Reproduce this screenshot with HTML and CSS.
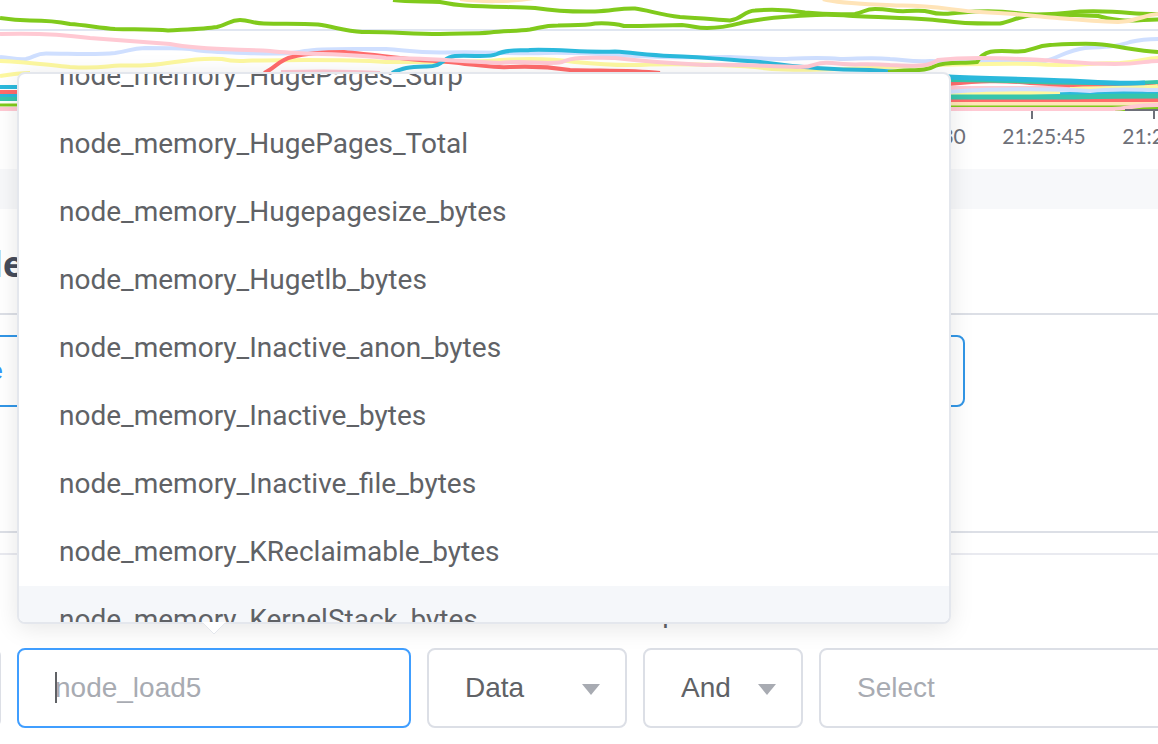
FILE: index.html
```html
<!DOCTYPE html>
<html lang="en">
<head>
<meta charset="utf-8">
<title>Metric rule</title>
<link rel="stylesheet" href="styles.css">
</head>
<body>
<main class="page">
  <section class="chart">
    <svg class="plot" viewBox="0 0 1158 120" preserveAspectRatio="none" aria-hidden="true">
      <path class="grid" d="M0 30H1158"/>
      <g class="series">
        <path class="peach" d="M460 -1C480 2 510 2 534 -2"/>
        <path class="green" d="M0 18C12 20 18 20.500 30 20.500C50 20.500 58 21.500 70 24C85 25 100 28 115 29C135 29.500 155 29 168 30.500C185 29.500 205 29 217 27C229 24 230 20 240 20C250 20 252 23.500 264 23.500C285 24 300 23.500 318 24.500C335 27 345 31 362 32C390 31.500 410 34 440 34C458 33 475 34 490 32.500C505 31 518 31 530 29.500C543 27 545 25.500 558 25.500C575 25 585 25.500 595 23.500C607 23 614 23 624 26C640 26.500 665 25.500 682 25C695 26 695 28 707 28C725 28 733 25 745 22C765 18 790 16 816 15C832 14 837 15 853 16C885 17.500 915 18 945 21C965 24 985 23.500 1000 23.500C1012 21 1020 16 1034 15C1060 14 1080 15 1098 16C1110 19 1113 20 1125 20.500C1138 21 1145 19.500 1158 19.500"/>
        <path class="green" d="M393 0C410 2 425 1 440 2C450 4 455 5 465 5.500C490 7 515 7 535 8C555 11 570 12 595 11.500C612 11 620 8 635 8.500C648 10 660 15 680 17C700 18 715 19.500 730 20.500C743 19 743 11 755 10.500C775 9 790 10 805 12.500C820 14 840 14.500 855 14C865 12 865 9 875 9C890 9 895 12 907 11C920 11 922 10 930 12C942 16 950 13 962 12.500C980 11 1000 11 1016 13C1034 16 1058 14 1080 11.500C1100 11 1120 12 1130 13C1142 14 1150 14 1158 14"/>
        <path class="peach" d="M823 -1C840 4 870 4 900 5.500C935 5 955 11 980 12C1010 13 1025 15 1045 17C1070 19 1090 21 1118 22C1140 21 1142 15 1158 14"/>
        <path class="blue" d="M0 57C12 58 18 60 26 59C35 57 36 53.500 46 53.500C70 53.500 95 55 115 53C130 51 130 48.500 145 48C162 48 175 48 190 49C204 52 220 52 245 53C275 54 290 54 305 51C320 48 350 49 386 49C405 50 415 53 445 52.500C480 51 510 54 545 53C580 52 615 55 640 56C670 58 700 57 730 57C750 58 765 59 785 59C805 58 820 57 840 59C858 59 870 57 890 59C908 60 910 62 930 61C965 62 1010 63 1045 61C1058 58 1068 50 1085 48C1102 47 1118 47 1130 42C1143 39 1150 39 1158 39"/>
        <path class="yellow" d="M0 61C25 62 50 65 70 67C100 69 105 66 120 65.500C145 66 155 65 175 62C195 59 210 58 222 59C234 62 240 61 252 60.500C290 60 340 59 386 62C430 62 470 63 500 60C535 58 555 59 575 62C595 64 625 66 650 64.500C690 64 740 65 772 69C810 71 850 69 890 67C930 65 1000 63 1035 64C1070 67 1090 63 1120 63C1140 62 1145 58 1158 58"/>
        <path class="red" d="M264 73C274 69 280 59 292 57C307 53 325 52 344 52C362 54 380 55 400 58C425 61 445 61 465 64C485 65 490 68 510 67C530 66 550 67 570 70C600 71 630 70 660 73"/>
        <path class="cyan" d="M392 73C403 68 408 67 425 66.500C445 67 442 57 455 56C475 55 488 58 497 54C507 49 520 51 530 50C560 49 585 53 615 51.500C635 53 650 55 670 56C705 57 730 60 760 62C795 67 835 70 870 70C905 72 925 74 951 77"/>
        <path class="green" d="M888 72C910 69 925 72 935 66C948 61 963 64 977 62C985 48 999 51 1018 51.500C1034 51 1034 46 1050 45C1070 44 1088 43 1102 44.500C1123 47 1139 51 1158 52"/>
        <path class="pink" d="M0 34C30 33 60 34 90 38C120 40 145 42 170 44C200 50 235 49 270 51C305 55 345 53 386 58C425 58 460 61 500 63C525 60 545 65 562 62C575 56 595 58 615 58C650 62 685 64 705 65C735 64 760 66 800 67C818 67 813 61 832 63C855 66 860 63 890 65C918 66 928 67 938 60C962 57 1000 58 1020 59C1055 60 1080 64 1115 64C1140 64 1145 61 1158 61"/>
        <path class="pink" d="M281 72C320 71 350 71 380 73"/>
        <path class="yellow" d="M0 76C12 74 18 73 30 73"/>
      </g>
      <g class="series">
        <path class="cyan" d="M0 87H20"/><path class="red" d="M0 92H20"/><path class="cyan" d="M0 96H20"/><path class="teal" d="M0 99H20"/><path class="green thin" d="M0 105H20"/><path class="pink" d="M0 109H20"/>
        <path class="pink" d="M948 88H1158"/>
        <path class="red" d="M948 84C980 81 1000 80 1030 83C1080 86 1110 87 1158 85"/>
        <path class="teal" d="M948 80C1020 80 1090 86 1158 82"/>
        <path class="cyan wide" d="M948 77C990 79 1030 79 1070 81C1105 83 1130 84 1145 83"/>
        <path class="yellow" d="M1070 89C1100 87 1145 89 1158 86"/>
        <path class="cyan" d="M1030 95L1110 93H1158"/><path class="yellow" d="M948 93H1030L1060 92"/>
        <path class="blue" d="M948 92C980 89 1050 88 1090 91C1115 88 1140 90 1158 90"/>
        <path class="red" d="M948 100H1158"/>
        <path class="teal wide" d="M948 97H1075C1100 96 1130 96 1158 96"/>
        <path class="peach" d="M948 104H1158"/>
        <path class="green thin" d="M948 107H1158"/>
        <path class="green" d="M1115 109H1158"/>
        <path class="pink" d="M948 109H1112C1130 109 1130 105 1158 105"/>
      </g>
      <path class="tick" d="M1125 110H1158M1032 111V119M1154 111V119"/>
    </svg>
    <div class="axis"><span>21:25:30</span><span>21:25:45</span><span>21:26:00</span></div>
  </section>
  <div class="band"></div>
  <header class="head"><h2>le</h2></header>
  <section class="panel"><button class="add" type="button">e</button></section>
  <form class="rule">
    <div class="field mid"><input class="control" type="text" aria-label="Name"></div>
    <div class="field metric">
      <input class="control active" type="text" placeholder="node_load5" aria-label="Metric">
      <span class="cursor"></span>
      <div class="popup">
        <div class="view">
          <ul class="list">
            <li>node_memory_HugePages_Surp</li>
            <li>node_memory_HugePages_Total</li>
            <li>node_memory_Hugepagesize_bytes</li>
            <li>node_memory_Hugetlb_bytes</li>
            <li>node_memory_Inactive_anon_bytes</li>
            <li>node_memory_Inactive_bytes</li>
            <li>node_memory_Inactive_file_bytes</li>
            <li>node_memory_KReclaimable_bytes</li>
            <li class="hover">node_memory_KernelStack_bytes</li>
          </ul>
        </div>
        <svg class="arrow" viewBox="0 0 24 13" aria-hidden="true"><path d="M0 0L12 12L24 0Z" fill="#fff"/><path d="M1 1L12 12L23 1" fill="none" stroke="#e4e7ed" stroke-width="1"/></svg>
      </div>
    </div>
    <div class="field mid">
      <select class="control" aria-label="Source"><option>Data</option></select>
      <svg class="caret" viewBox="0 0 18 11" aria-hidden="true"><path d="M0 0H18L9 11Z"/></svg>
    </div>
    <div class="field small">
      <label for="operator">Operator</label>
      <select class="control" id="operator"><option>And</option></select>
      <svg class="caret" viewBox="0 0 18 11" aria-hidden="true"><path d="M0 0H18L9 11Z"/></svg>
    </div>
    <div class="field large">
      <select class="control empty" aria-label="Value"><option>Select</option></select>
    </div>
  </form>
</main>
</body>
</html>
```
FILE: styles.css
```css
* { box-sizing: border-box; }
body {
  margin: 0;
  background: #fff;
  color: #606266;
  font-family: Roboto, sans-serif;
  font-size: 28px;
}
.page { min-height: 100vh; overflow: hidden; }

.chart { height: 169px; }
.plot { display: block; width: 100%; height: 120px; }
.plot path { fill: none; }
.grid { stroke: #e0e6f1; stroke-width: 2; }
.series path { stroke-width: 4; }
.series .thin { stroke-width: 3; }
.series .wide { stroke-width: 5; }
.green { stroke: #80ca1c; }
.blue { stroke: #cfdfff; }
.pink { stroke: #ffc9d3; }
.yellow { stroke: #fdf8a0; }
.red { stroke: #ff6b6b; }
.cyan { stroke: #2bb9dc; }
.teal { stroke: #37c5ac; }
.peach { stroke: #ffe4b8; }
.tick { stroke: #6e7079; stroke-width: 2; }
.axis {
  display: flex;
  justify-content: flex-end;
  gap: 36px;
  margin-right: -48px;
  color: #6e7079;
  font: 21px/32px Lato, sans-serif;
}
.axis span { flex: none; width: 84px; text-align: center; }

.band { height: 40px; background: #f7f8fa; }
.head {
  display: flex;
  align-items: center;
  height: 106px;
  padding-top: 6px;
  border-bottom: 2px solid #dcdfe6;
}
.head h2 {
  margin: 0 0 0 -8px;
  color: #464c5b;
  font: bold 36px/48px "Noto Sans", sans-serif;
}
.panel {
  height: 218px;
  padding-top: 20px;
  border-bottom: 2px solid #dcdfe6;
}
.add {
  width: 985px;
  height: 72px;
  margin-left: -20px;
  padding: 0 8px;
  border: 2px solid #3296e6;
  border-radius: 8px;
  background: none;
  color: #3296fa;
  font: 24px/32px Roboto, sans-serif;
  text-align: left;
}

.rule {
  display: flex;
  align-items: flex-end;
  gap: 16px;
  margin: 20px 0 16px -199px;
  border-top: 2px solid #e9eaf0;
}
.field { position: relative; flex: none; padding-top: 93px; }
.metric { width: 394px; }
.mid { width: 200px; }
.small { width: 160px; padding-top: 38px; }
.large { width: 400px; }
.field label { display: block; height: 55px; line-height: 40px; }
.control {
  display: block;
  width: 100%;
  height: 80px;
  padding: 0 36px;
  border: 2px solid #dcdfe6;
  border-radius: 8px;
  outline: none;
  appearance: none;
  background: #fff;
  color: #606266;
  font: 28px/40px "Liberation Sans", sans-serif;
}
.control::placeholder { color: #a8abb2; opacity: 1; }
.control.active { border-color: #409eff; }
.control.empty { color: #a8abb2; }
.caret {
  position: absolute;
  right: 27px;
  bottom: 33px;
  width: 18px;
  height: 11px;
  fill: #a8abb2;
  pointer-events: none;
}
.cursor {
  position: absolute;
  left: 38px;
  bottom: 25px;
  width: 2px;
  height: 31px;
  background: #606266;
}

.popup {
  position: absolute;
  z-index: 2;
  left: 0;
  bottom: 104px;
  width: 934px;
  border: 2px solid #e4e7ed;
  border-radius: 8px;
  background: #fff;
  box-shadow: 0 4px 24px rgba(0, 0, 0, 0.1);
}
.view { height: 548px; overflow: hidden; border-radius: 6px; }
.list { margin: -32px 0 0; padding: 0; list-style: none; }
.list li { height: 68px; padding: 0 40px; line-height: 68px; }
.list .hover { background: #f5f7fa; }
.arrow {
  position: absolute;
  left: 183px;
  bottom: -13px;
  width: 24px;
  height: 13px;
}
```
